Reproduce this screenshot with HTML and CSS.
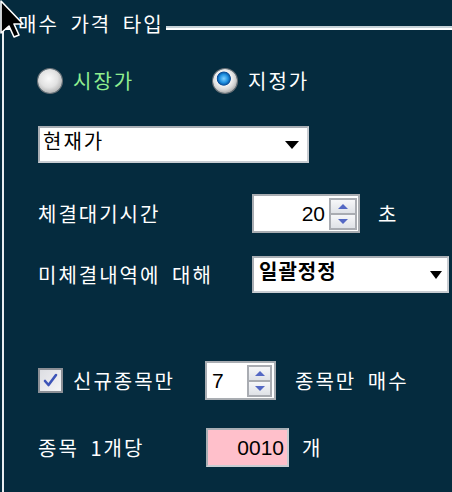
FILE: index.html
```html
<!DOCTYPE html>
<html lang="ko">
<head>
  <meta charset="UTF-8">
  <title>매수 가격 타입</title>
  <link rel="stylesheet" href="styles.css">
</head>
<body>
  <svg class="cursor" width="26" height="40" viewBox="0 0 26 40">
    <polygon points="1,1 1,33 9,26 14,37 19,35 14,24 23,24" fill="#000" stroke="#fff" stroke-width="1.6" stroke-linejoin="round"/>
  </svg>

  <div class="group">
    <div class="legend">
      <span class="cap"></span>
      <span class="title">매수 가격 타입</span>
      <span class="rule"></span>
    </div>

    <div class="panel">
      <div class="row row-radio">
        <label class="opt opt-market">
          <span class="radio"></span>
          <span class="green">시장가</span>
        </label>
        <label class="opt">
          <span class="radio on"></span>
          <span>지정가</span>
        </label>
      </div>

      <div class="row row-select">
        <div class="select sel-price">
          <span class="sel-text">현재가</span>
          <svg class="arrow" width="14" height="8" viewBox="0 0 14 8"><polygon points="0,0 14,0 7,8" fill="#000"/></svg>
        </div>
      </div>

      <div class="row row-wait">
        <span class="lbl lbl-wide">체결대기시간</span>
        <div class="spin spin-wait">
          <span class="num">20</span>
          <div class="btns">
            <span class="btn"><i class="up"></i></span>
            <span class="btn"><i class="down"></i></span>
          </div>
        </div>
        <span class="unit unit-sec">초</span>
      </div>

      <div class="row row-unfilled">
        <span class="lbl lbl-wide">미체결내역에 대해</span>
        <div class="select sel-mode">
          <span class="sel-text bold">일괄정정</span>
          <svg class="arrow" width="12" height="8" viewBox="0 0 12 8"><polygon points="0,0 12,0 6,8" fill="#000"/></svg>
        </div>
      </div>

      <div class="row row-new">
        <label class="check-wrap">
          <span class="check">
            <svg width="21" height="21" viewBox="0 0 21 21"><path d="M5 11 L8.5 15 L16 5" fill="none" stroke="#3d54b8" stroke-width="2.6" stroke-linecap="round" stroke-linejoin="round"/></svg>
          </span>
          <span>신규종목만</span>
        </label>
        <div class="spin spin-count">
          <span class="num left">7</span>
          <div class="btns">
            <span class="btn"><i class="up"></i></span>
            <span class="btn"><i class="down"></i></span>
          </div>
        </div>
        <span class="unit unit-buy">종목만 매수</span>
      </div>

      <div class="row row-per">
        <span class="lbl lbl-per">종목 1개당</span>
        <div class="amount"><span class="num">0010</span></div>
        <span class="unit unit-ea">개</span>
      </div>
    </div>
  </div>
</body>
</html>
```

FILE: styles.css
```css
* {
  margin: 0;
  padding: 0;
  box-sizing: border-box;
}

body {
  background-color: #052b3e;
  color: #fff;
  font-family: "Noto Sans CJK KR", "Noto Sans", sans-serif;
  font-size: 20px;
  letter-spacing: 2px;
  word-spacing: 4px;
  height: 100vh;
  overflow: hidden;
  position: relative;
}

.cursor {
  position: absolute;
  top: 0;
  left: 0;
  z-index: 5;
}

.group {
  padding-top: 14px;
}

.legend {
  display: flex;
  align-items: flex-start;
  height: 20px;
}

.cap {
  width: 14px;
  margin-left: 2px;
  margin-top: 12px;
  height: 4px;
  border-top: 2px solid #c6d2d8;
  background-color: #fff;
}

.title {
  line-height: 20px;
  padding: 0 2px;
  white-space: nowrap;
}

.rule {
  flex: 1;
  margin-top: 12px;
  height: 4px;
  border-top: 2px solid #c6d2d8;
  background-color: #fff;
}

.panel {
  margin-left: 2px;
  margin-top: -6px;
  border-left: 2px solid #e9eef1;
  padding: 41px 0 25px 34px;
  height: calc(100vh - 28px);
}

.row {
  display: flex;
  align-items: center;
  white-space: nowrap;
}

.row-radio {
  height: 24px;
}

.opt {
  display: flex;
  align-items: center;
  gap: 11px;
  line-height: 24px;
}

.opt-market {
  width: 175px;
}

.radio {
  width: 24px;
  height: 24px;
  border-radius: 50%;
  background: radial-gradient(circle at 45% 40%, #fafafa 0, #e2e2e2 45%, #bdbdbd 70%, #8f8f8f 100%);
  box-shadow: 0 0 0 1px #6c7278;
}

.radio.on {
  background:
    radial-gradient(circle at 45% 40%, #7fd0ff 0, #1d8fe0 22%, #0b4f9a 34%, #f2f2f2 38%, #d6d6d6 58%, #9a9a9a 80%, #707070 100%);
}

.green {
  color: #90ee90;
}

.row-select {
  margin-top: 33px;
}

.select {
  display: flex;
  align-items: center;
  height: 37px;
  background-color: #fff;
  color: #000;
  border: 2px solid #c9cdd2;
  border-top-color: #a9aeb4;
  border-left-color: #a9aeb4;
}

.sel-text {
  flex: 1;
  line-height: 24px;
  align-self: flex-start;
  margin-top: 1px;
}

.sel-price {
  width: 271px;
  padding: 0 8px 0 3px;
}

.sel-mode {
  width: 197px;
  padding: 0 5px 0 5px;
}

.bold {
  font-weight: bold;
  letter-spacing: 1px;
}

.row-wait {
  margin-top: 31px;
}

.lbl-wide {
  width: 214px;
}

.spin {
  display: flex;
  align-items: center;
  height: 39px;
  background-color: #fff;
  color: #000;
  border: 2px solid #a9adb2;
}

.spin-wait {
  width: 108px;
}

.num {
  flex: 1;
  text-align: right;
  font-family: "Liberation Sans", Arial, sans-serif;
  font-size: 21px;
  letter-spacing: 0;
  padding-right: 4px;
}

.num.left {
  text-align: left;
  padding: 0 0 0 5px;
}

.btns {
  display: flex;
  flex-direction: column;
  gap: 2px;
  width: 28px;
  height: 32px;
  padding: 2px;
  margin-right: 1px;
  background-color: #a9acb2;
}

.spin-count .btns {
  width: 25px;
  margin-right: 2px;
}

.btn {
  flex: 1;
  display: flex;
  align-items: center;
  justify-content: center;
  background: linear-gradient(#f6f7f9, #dfe2e7);
}

.up {
  width: 0;
  height: 0;
  border-left: 5px solid transparent;
  border-right: 5px solid transparent;
  border-bottom: 5px solid #5468c4;
}

.down {
  width: 0;
  height: 0;
  border-left: 5px solid transparent;
  border-right: 5px solid transparent;
  border-top: 5px solid #5468c4;
}

.unit-sec {
  margin-left: 18px;
}

.row-unfilled {
  margin-top: 23px;
}

.row-new {
  margin-top: 68px;
}

.check-wrap {
  display: flex;
  align-items: center;
  gap: 10px;
  width: 167px;
}

.check {
  width: 25px;
  height: 25px;
  border: 2px solid #8c8f95;
  background: linear-gradient(135deg, #dcdde2, #f5f5f7);
}

.check svg {
  display: block;
}

.spin-count {
  width: 71px;
}

.unit-buy {
  margin-left: 19px;
}

.row-per {
  margin-top: 28px;
}

.lbl-per {
  width: 168px;
}

.amount {
  display: flex;
  align-items: center;
  width: 83px;
  height: 39px;
  background-color: #ffc0cb;
  color: #000;
  border: 2px solid #c9cdd2;
  border-top-color: #a9aeb4;
  border-left-color: #a9aeb4;
}

.amount .num {
  padding-right: 3px;
}

.unit-ea {
  margin-left: 13px;
}
```
